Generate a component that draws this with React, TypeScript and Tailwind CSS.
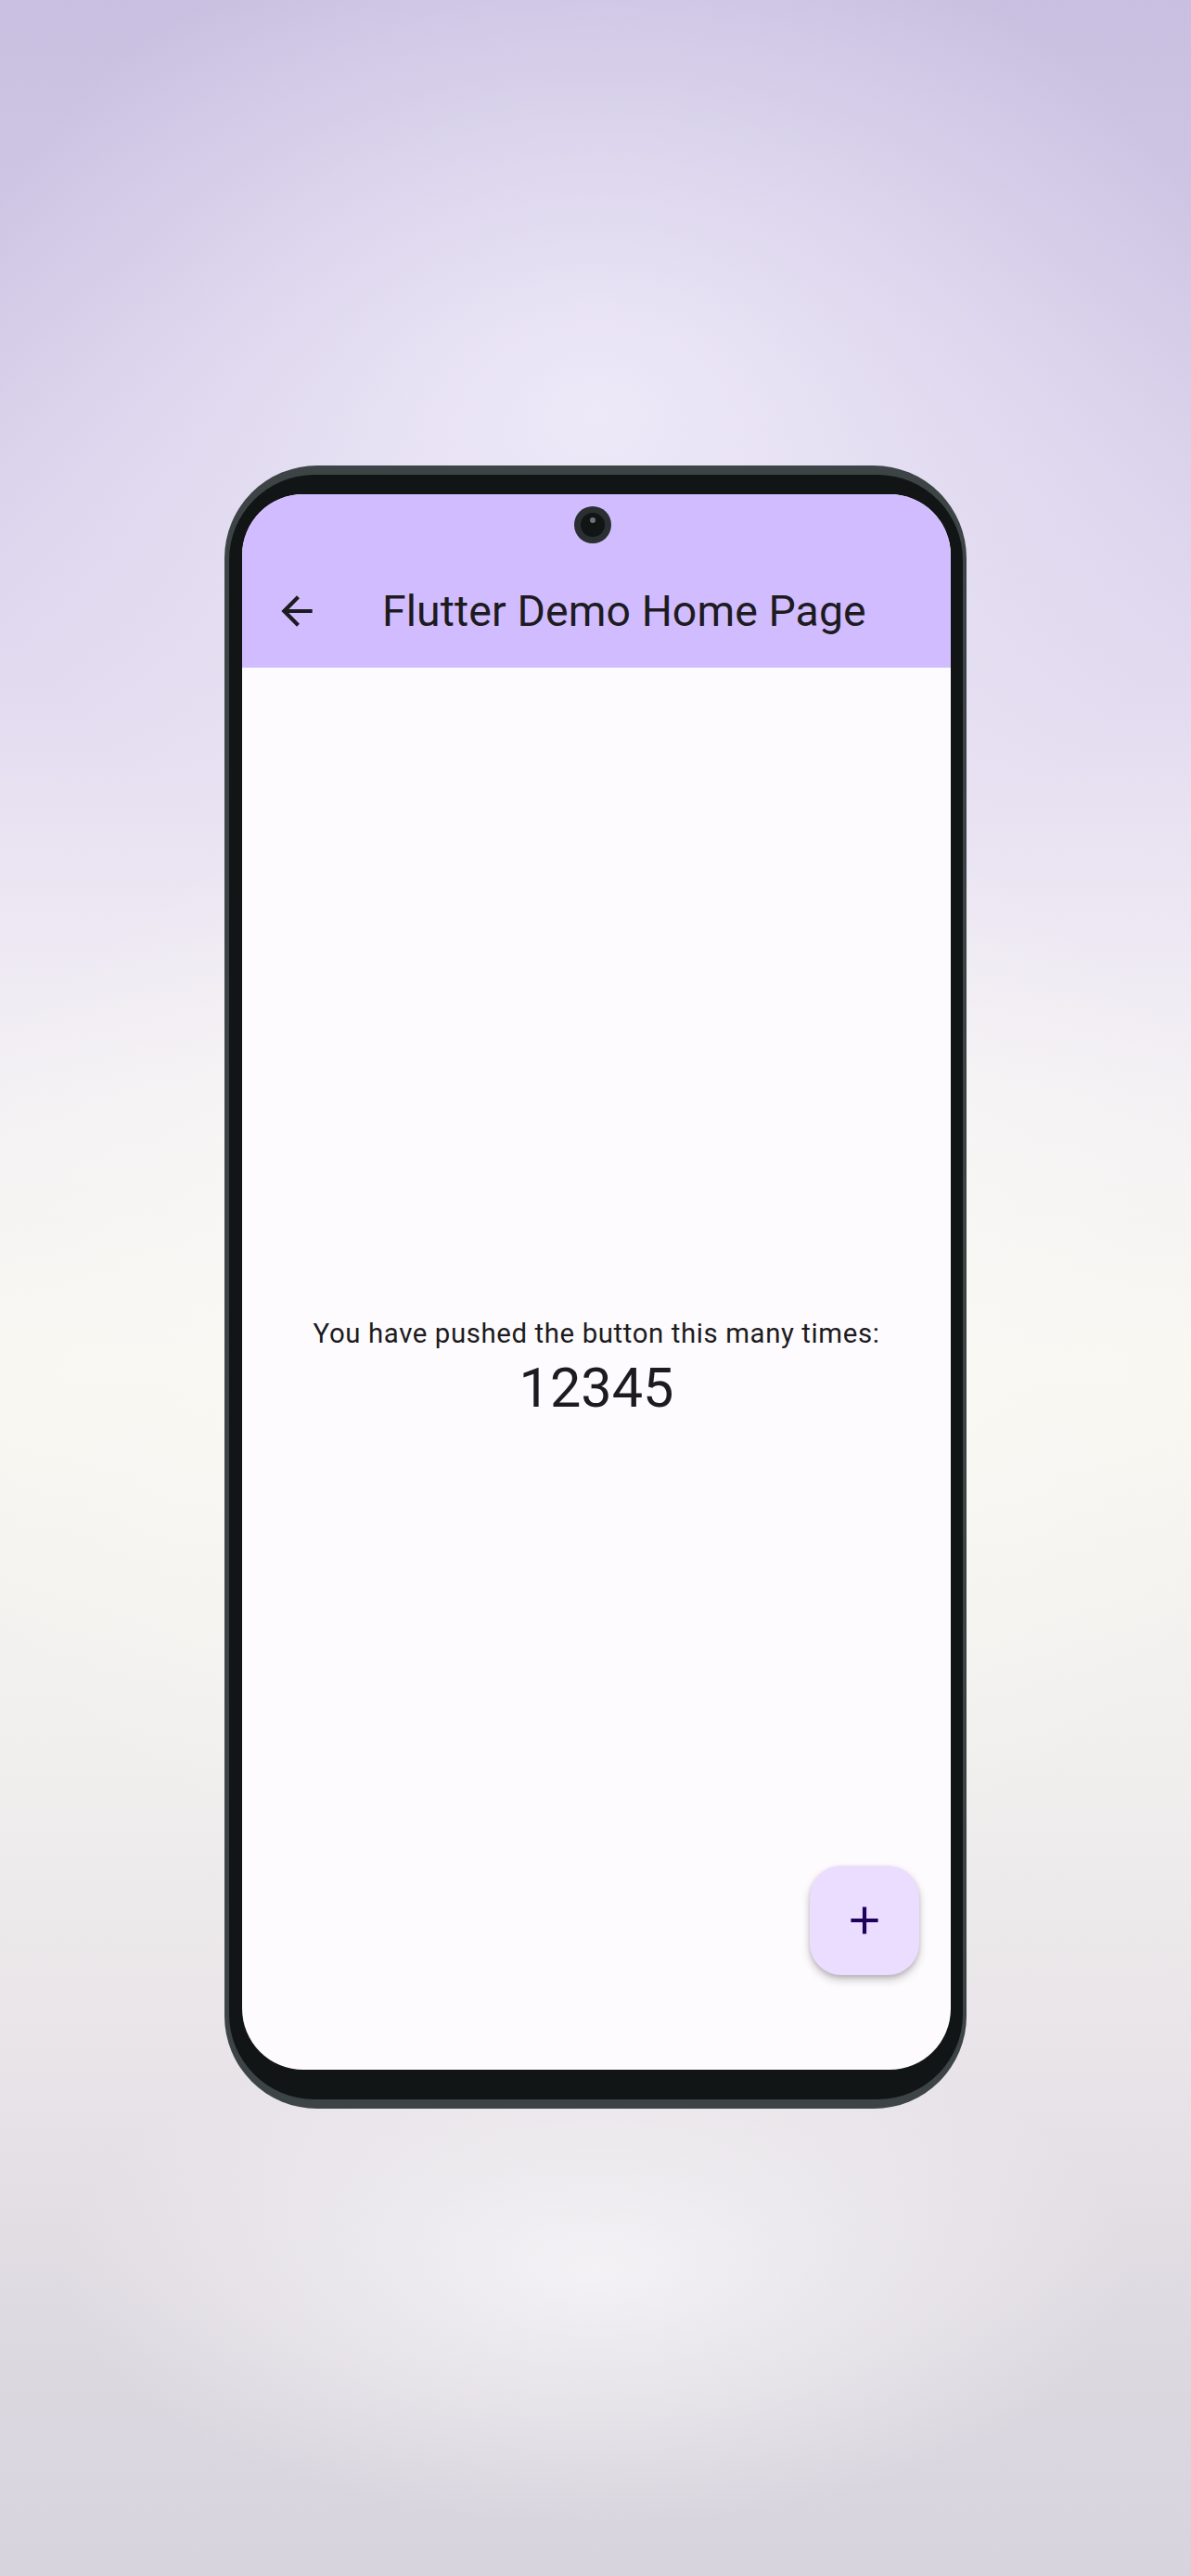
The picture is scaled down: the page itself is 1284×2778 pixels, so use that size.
const ArrowBack = () => (
  <svg viewBox="0 0 24 24" className="w-[50px] h-[50px] fill-[#1d1b20]" aria-hidden>
    <path d="M20 11H7.83l5.59-5.59L12 4l-8 8 8 8 1.41-1.41L7.83 13H20v-2z" />
  </svg>
);

const AddIcon = () => (
  <svg viewBox="0 0 24 24" className="w-[50px] h-[50px] fill-[#21005d]" aria-hidden>
    <path d="M19 13h-6v6h-2v-6H5v-2h6V5h2v6h6v2z" />
  </svg>
);

export default function App() {
  return (
    <main
      className="w-[1284px] h-[2778px] flex justify-center pt-[502px] bg-[radial-gradient(ellipse_55%_20%_at_50%_16%,rgba(240,236,250,0.9)_0%,rgba(240,236,250,0)_100%),radial-gradient(ellipse_60%_22%_at_50%_52%,rgba(252,250,246,0.9)_0%,rgba(252,250,246,0)_100%),radial-gradient(ellipse_45%_10%_at_50%_88%,rgba(246,244,247,0.9)_0%,rgba(246,244,247,0)_100%),linear-gradient(180deg,#c9c0e1_0%,#d0c7e5_10%,#e4ddf1_28%,#f3f0f4_42%,#f8f7f1_53%,#f1efee_68%,#e8e4e8_80%,#dcd8e0_92%,#d8d4de_100%)] font-['Roboto',sans-serif]"
    >
      {/* phone body */}
      <div className="w-[800px] h-[1772px] rounded-[100px] bg-[#3d4446] pt-[10px] pl-[5px] pr-[4px] pb-[10px]">
        <div className="w-full h-full rounded-[92px] bg-[#121516] pt-[21px] pl-[14px] pr-[13px] pb-[32px]">
          <div className="relative w-[764px] h-[1699px] rounded-[66px] overflow-hidden bg-[#fefbfe] flex flex-col">
            {/* app bar */}
            <header className="bg-[#d1bcff] flex flex-col">
              <div className="h-[53px]" />
              <div className="h-[134px] pt-[12px] flex items-center">
                <div className="w-[118px] flex justify-center">
                  <ArrowBack />
                </div>
                <div className="w-[33px]" />
                <h1 className="text-[46.4px] leading-[59px] tracking-[0.1px] text-[#1d1b20] font-normal">
                  Flutter Demo Home Page
                </h1>
              </div>
            </header>

            {/* camera punch-hole */}
            <div className="absolute left-[358px] top-[13px] w-[40px] h-[40px] rounded-full bg-[#2a2f31] flex items-center justify-center">
              <div className="relative w-[26px] h-[26px] rounded-full bg-[#121516]">
                <div className="absolute left-[10px] top-[5px] w-[6px] h-[6px] rounded-full bg-[#6b7578]" />
              </div>
            </div>

            <div className="flex-1 flex flex-col items-center justify-center text-[#1d1b20]">
              <p className="text-[29.4px] leading-[42px] tracking-[0.6px]">
                You have pushed the button this many times:
              </p>
              <p className="text-[59.4px] leading-[76px]">12345</p>
            </div>

            {/* FAB */}
            <button className="absolute right-[34px] bottom-[102px] w-[118px] h-[118px] rounded-[34px] bg-[#eaddff] flex items-center justify-center shadow-[0_5px_10px_rgba(0,0,0,0.22),0_2px_4px_rgba(0,0,0,0.12)]">
              <AddIcon />
            </button>
          </div>
        </div>
      </div>
    </main>
  );
}
